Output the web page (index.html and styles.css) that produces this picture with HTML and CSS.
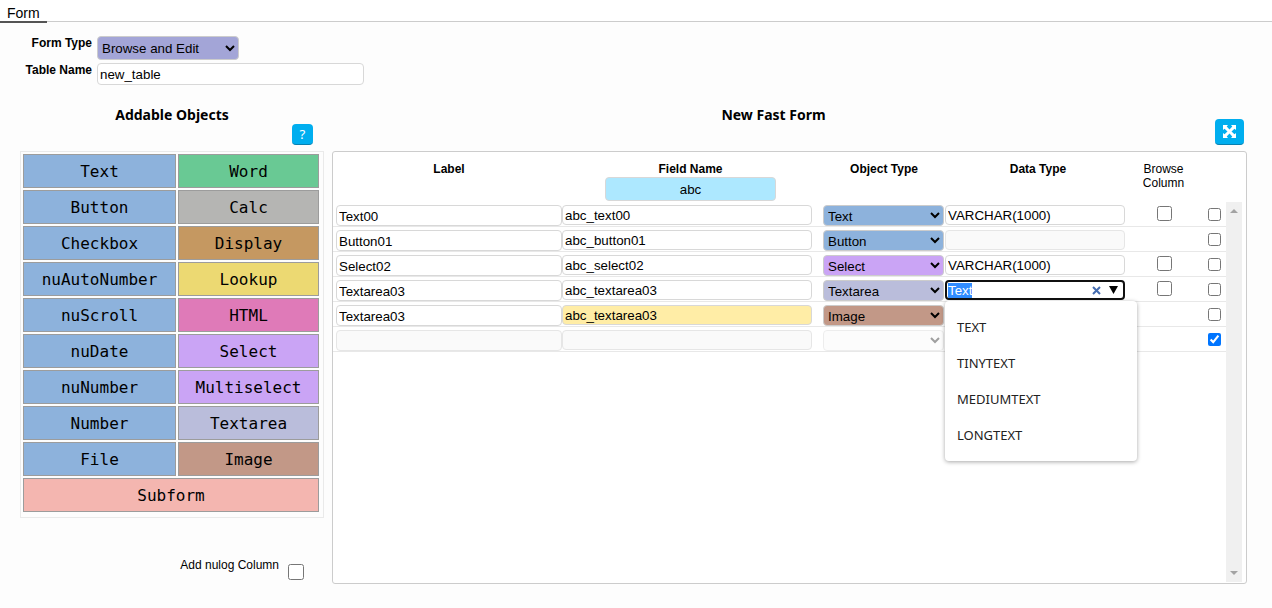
FILE: index.html
```html
<!DOCTYPE html>
<html lang="en">
<head>
<meta charset="utf-8">
<meta name="viewport" content="width=device-width, initial-scale=1">
<title>Fast Form</title>
<link rel="stylesheet" href="styles.css">
</head>
<body>
<nav class="tabs"><button type="button" class="tab">Form</button></nav>

<section class="settings">
  <label class="caption" for="form-type">Form Type</label>
  <select id="form-type" class="form-type"><option>Browse and Edit</option></select>
  <label class="caption" for="table-name">Table Name</label>
  <input id="table-name" class="field table-name" type="text" value="new_table">
</section>

<main class="main">
  <section class="objects">
    <header class="objects-head">
      <h2 class="heading">Addable Objects</h2>
      <button type="button" class="action help" aria-label="Help">?</button>
    </header>
    <div class="object-grid">
      <button type="button" class="object blue">Text</button>
      <button type="button" class="object green">Word</button>
      <button type="button" class="object blue">Button</button>
      <button type="button" class="object grey">Calc</button>
      <button type="button" class="object blue">Checkbox</button>
      <button type="button" class="object tan">Display</button>
      <button type="button" class="object blue">nuAutoNumber</button>
      <button type="button" class="object yellow">Lookup</button>
      <button type="button" class="object blue">nuScroll</button>
      <button type="button" class="object pink">HTML</button>
      <button type="button" class="object blue">nuDate</button>
      <button type="button" class="object purple">Select</button>
      <button type="button" class="object blue">nuNumber</button>
      <button type="button" class="object purple">Multiselect</button>
      <button type="button" class="object blue">Number</button>
      <button type="button" class="object lavender">Textarea</button>
      <button type="button" class="object blue">File</button>
      <button type="button" class="object brown">Image</button>
      <button type="button" class="object salmon wide">Subform</button>
    </div>
    <div class="nulog">
      <label for="nulog">Add nulog Column</label>
      <input id="nulog" class="check check-large" type="checkbox">
    </div>
  </section>

  <section class="builder">
    <header class="builder-head">
      <h2 class="heading">New Fast Form</h2>
      <button type="button" class="action expand" aria-label="Expand">
        <svg width="13" height="13" viewBox="0 0 13 13" fill="#fff" aria-hidden="true">
          <path d="M0 0h5L3.700 1.500 6.500 4.500 9.300 1.500 8 0h5v5L11.500 3.700 8.500 6.500 11.500 9.300 13 8v5H8L9.300 11.500 6.500 8.500 3.700 11.500 5 13H0V8L1.500 9.300 4.500 6.500 1.500 3.700 0 5z"/>
        </svg>
      </button>
    </header>
    <div class="panel">
      <div class="table-area">
        <table class="fields">
          <colgroup>
            <col><col class="col-name"><col class="col-type"><col class="col-data"><col class="col-browse"><col class="col-delete">
          </colgroup>
          <thead>
            <tr>
              <th class="label-head">Label</th>
              <th class="name-head"><label for="prefix">Field Name</label><input id="prefix" class="field prefix" type="text" value="abc"></th>
              <th>Object Type</th>
              <th class="data-head">Data Type</th>
              <th class="light">Browse Column</th>
              <td></td>
            </tr>
          </thead>
          <tbody>
            <tr>
              <td class="first"><input class="field label-field" type="text" aria-label="Label" value="Text00"></td>
              <td class="name"><input class="field" type="text" aria-label="Field name" value="abc_text00"></td>
              <td><select class="type blue" aria-label="Object type"><option>Text</option></select></td>
              <td class="data"><input class="field" type="text" aria-label="Data type" value="VARCHAR(1000)"></td>
              <td class="browse"><input class="check" type="checkbox" aria-label="Browse column"></td>
              <td class="delete"><input class="check" type="checkbox" aria-label="Delete"></td>
            </tr>
            <tr>
              <td class="first"><input class="field label-field" type="text" aria-label="Label" value="Button01"></td>
              <td class="name"><input class="field" type="text" aria-label="Field name" value="abc_button01"></td>
              <td><select class="type blue" aria-label="Object type"><option>Button</option></select></td>
              <td class="data"><input class="field" type="text" aria-label="Data type" disabled></td>
              <td></td>
              <td class="delete"><input class="check" type="checkbox" aria-label="Delete"></td>
            </tr>
            <tr>
              <td class="first"><input class="field label-field" type="text" aria-label="Label" value="Select02"></td>
              <td class="name"><input class="field" type="text" aria-label="Field name" value="abc_select02"></td>
              <td><select class="type purple" aria-label="Object type"><option>Select</option></select></td>
              <td class="data"><input class="field" type="text" aria-label="Data type" value="VARCHAR(1000)"></td>
              <td class="browse"><input class="check" type="checkbox" aria-label="Browse column"></td>
              <td class="delete"><input class="check" type="checkbox" aria-label="Delete"></td>
            </tr>
            <tr>
              <td class="first"><input class="field label-field" type="text" aria-label="Label" value="Textarea03"></td>
              <td class="name"><input class="field" type="text" aria-label="Field name" value="abc_textarea03"></td>
              <td><select class="type lavender" aria-label="Object type"><option>Textarea</option></select></td>
              <td class="data">
                <div class="combo">
                  <input id="active-type" class="field active" type="text" aria-label="Data type" value="Text" autocomplete="off">
                  <div class="combo-tools">
                    <button type="button" class="tool" aria-label="Clear"><svg width="9" height="9" viewBox="0 0 9 9" aria-hidden="true"><path d="M1 1l7 7M8 1L1 8" stroke="#446cb0" stroke-width="2"/></svg></button>
                    <button type="button" class="tool" aria-label="Show options"><svg width="9" height="8" viewBox="0 0 9 8" aria-hidden="true"><path d="M0 0h9L4.500 8z"/></svg></button>
                  </div>
                  <ul class="menu" role="listbox" aria-label="Data types">
                    <li class="option" role="option">TEXT</li>
                    <li class="option" role="option">TINYTEXT</li>
                    <li class="option" role="option">MEDIUMTEXT</li>
                    <li class="option" role="option">LONGTEXT</li>
                  </ul>
                </div>
              </td>
              <td class="browse"><input class="check" type="checkbox" aria-label="Browse column"></td>
              <td class="delete"><input class="check" type="checkbox" aria-label="Delete"></td>
            </tr>
            <tr>
              <td class="first"><input class="field label-field" type="text" aria-label="Label" value="Textarea03"></td>
              <td class="name"><input class="field duplicate" type="text" aria-label="Field name" value="abc_textarea03"></td>
              <td><select class="type brown" aria-label="Object type"><option>Image</option></select></td>
              <td></td>
              <td></td>
              <td class="delete"><input class="check" type="checkbox" aria-label="Delete"></td>
            </tr>
            <tr>
              <td class="first"><input class="field label-field" type="text" aria-label="Label" disabled></td>
              <td class="name"><input class="field" type="text" aria-label="Field name" disabled></td>
              <td><select class="type" aria-label="Object type" disabled><option></option></select></td>
              <td></td>
              <td></td>
              <td class="delete"><input class="check" type="checkbox" aria-label="Delete" checked></td>
            </tr>
          </tbody>
        </table>
      </div>
      <div class="scrollbar" aria-hidden="true">
        <svg width="8" height="4" viewBox="0 0 8 4"><path d="M0 4h8L4 0z" fill="#a3a3a3"/></svg>
        <svg width="8" height="4" viewBox="0 0 8 4"><path d="M0 0h8L4 4z" fill="#a3a3a3"/></svg>
      </div>
    </div>
  </section>
</main>
<script src="script.js"></script>
</body>
</html>
```
FILE: styles.css
```css
* {
  box-sizing: border-box;
}

body {
  display: flex;
  flex-direction: column;
  min-height: 100vh;
  margin: 0;
  padding-bottom: 24px;
  background: #fdfdfd;
  color: #000;
  font-family: "Liberation Sans", Arial, sans-serif;
  font-size: 12px;
}

button,
input,
select {
  margin: 0;
  font-family: inherit;
}

.tabs {
  display: flex;
  height: 22px;
  background: #fff;
  border-bottom: 1px solid #ccc;
}

.tab {
  height: 23px;
  padding: 5px 7px 0;
  border: 0;
  border-bottom: 2px solid #555;
  background: none;
  font-size: 14px;
  line-height: 16px;
}

.settings {
  display: grid;
  grid-template-columns: 92px 267px;
  column-gap: 5px;
  row-gap: 3px;
  padding-top: 14px;
}

.caption {
  font-weight: bold;
  line-height: 14px;
  text-align: right;
}

.form-type {
  width: 142px;
  height: 24px;
  border: 1px solid #ccc;
  border-radius: 4px;
  background-color: #a3a5d7;
  color: #000;
}

.field {
  display: block;
  width: 100%;
  height: 20px;
  padding: 0 2px;
  border: 1px solid #d8d8d8;
  border-radius: 4px;
  background: #fff;
  color: #000;
}

.table-name {
  height: 22px;
}

.main {
  display: flex;
  flex: 1;
  gap: 8px;
  margin-top: 19px;
  padding: 0 25px 0 20px;
}

.heading {
  margin: 0;
  font-family: "Noto Sans", "Open Sans", sans-serif;
  font-size: 14px;
  font-weight: bold;
  line-height: 22px;
  text-align: center;
}

.action {
  border: 0;
  border-bottom: 1px solid #0880b0;
  border-radius: 4px;
  background: #00aeef;
  color: #fff;
}

.objects {
  flex: none;
  width: 304px;
}

.objects-head,
.builder-head {
  height: 47px;
}

.help {
  display: block;
  width: 21px;
  height: 21px;
  margin-top: -2px;
  margin-left: auto;
  margin-right: 11px;
  padding: 0;
  font-family: "Noto Sans", sans-serif;
}

.object-grid {
  display: grid;
  grid-template-columns: 153fr 141fr;
  gap: 2px;
  padding: 2px 4px 5px 2px;
  border: 1px solid #eaeaea;
}

.object {
  height: 34px;
  padding: 0;
  border: 1px solid #9c9c9c;
  color: #000;
  font-family: "DejaVu Sans Mono", monospace;
  font-size: 16px;
}

.wide {
  grid-column: span 2;
}

.blue { background-color: #8db2dc; }
.green { background-color: #69c994; }
.grey { background-color: #b5b5b3; }
.tan { background-color: #c59861; }
.yellow { background-color: #ecd972; }
.pink { background-color: #df7ab8; }
.purple { background-color: #caa4f5; }
.lavender { background-color: #babddb; }
.brown { background-color: #c29887; }
.salmon { background-color: #f4b6b0; }

.nulog {
  display: flex;
  justify-content: flex-end;
  gap: 9px;
  margin-top: 40px;
  padding-right: 20px;
}

.check {
  display: block;
  width: 13px;
  height: 13px;
}

.check-large {
  width: 16px;
  height: 16px;
  margin-top: 6px;
}

.builder {
  display: flex;
  flex: 1;
  flex-direction: column;
}

.builder-head {
  display: flex;
  align-items: flex-start;
  padding-right: 3px;
}

.builder-head .heading {
  flex: 1;
}

.expand {
  display: grid;
  place-items: center;
  width: 29px;
  height: 26px;
  margin-top: 15px;
  padding: 0;
}

.panel {
  display: flex;
  flex: 1;
  padding-right: 4px;
  border: 1px solid #ccc;
  border-radius: 3px;
  background: #fff;
}

.table-area {
  flex: 1;
}

.fields {
  width: 100%;
  border-collapse: separate;
  border-spacing: 0;
  table-layout: fixed;
}

.col-name { width: 261px; }
.col-type { width: 122px; }
.col-data { width: 180px; }
.col-browse { width: 77px; }
.col-delete { width: 24px; }

.fields th {
  height: 50px;
  padding: 10px 0 0;
  line-height: 14px;
  vertical-align: top;
}

.fields .light {
  padding: 10px 16px 0;
  font-weight: normal;
}

.fields .label-head {
  padding-left: 3px;
}

.fields .name-head {
  padding-right: 4px;
}

.fields .data-head {
  padding-left: 6px;
}

.prefix {
  width: 171px;
  height: 24px;
  margin: 1px auto 0;
  background: #ade8ff;
  text-align: center;
}

.fields tbody td {
  height: 25px;
  padding: 3px 0 0;
  border-bottom: 1px solid #e8e8e8;
  vertical-align: top;
}

.fields .first {
  padding-left: 3px;
}

.fields .label-field {
  height: 21px;
  padding-top: 2px;
}

.fields .name {
  padding-right: 11px;
}

.fields .browse {
  padding: 4px 0 0 1px;
}

.browse .check {
  width: 15px;
  height: 15px;
  margin: 0 auto;
}

.fields .delete {
  padding: 6px 0 0 6px;
}

.duplicate {
  background: #ffeda6;
}

.field:disabled {
  background: #fafafa;
  border-color: #e6e6e6;
}

.type {
  display: block;
  width: 121px;
  height: 21px;
  padding-top: 2px;
  border: 1px solid #ccc;
  border-radius: 4px;
  color: #000;
}

.type:disabled {
  border-color: #e6e6e6;
  background-color: #fcfcfc;
  color: #777;
}

.combo {
  position: relative;
}

.active,
.active:focus {
  border: 2px solid #101010;
  outline: 0;
  padding: 0 1px;
}

.active::selection {
  background: #308cff;
  color: #fff;
}

.combo-tools {
  position: absolute;
  top: 0;
  right: 7px;
  display: flex;
  align-items: center;
  gap: 8px;
  height: 20px;
}

.tool {
  display: block;
  padding: 0;
  border: 0;
  background: none;
  line-height: 0;
}

.menu {
  position: absolute;
  z-index: 1;
  top: 21px;
  left: 0;
  width: 192px;
  margin: 0;
  padding: 8px 0;
  border-radius: 4px;
  background: #fff;
  box-shadow: 0 1px 4px rgba(0, 0, 0, 0.35);
  list-style: none;
}

.option {
  padding: 0 12px;
  color: #222;
  font-family: "Noto Sans", "Open Sans", sans-serif;
  font-size: 13px;
  line-height: 36px;
}

.scrollbar {
  display: flex;
  flex-direction: column;
  align-items: center;
  justify-content: space-between;
  width: 16px;
  margin: 50px 0 1px;
  padding: 7px 0;
  background: #f0f0f0;
}
```
FILE: script.js
```js
const activeType = document.getElementById('active-type');
activeType.focus();
activeType.select();
```
